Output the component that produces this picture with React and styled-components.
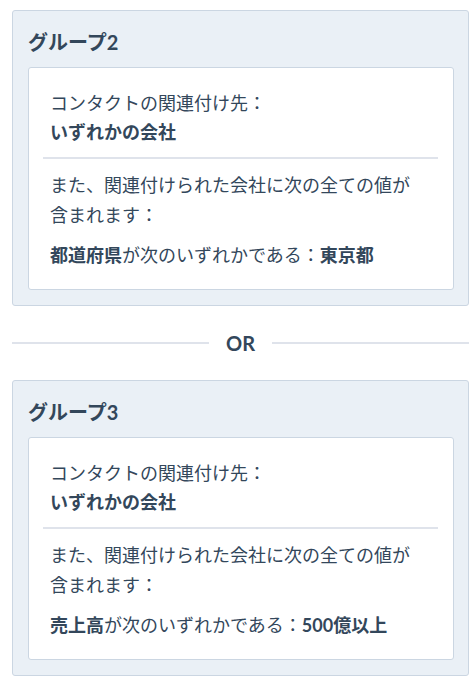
import styled, { createGlobalStyle } from 'styled-components'

const GlobalStyle = createGlobalStyle`
body {
  margin: 0;
  background: #ffffff;
  font-family: Lato, "Noto Sans CJK JP", sans-serif;
  color: #33475b;
}
`;

const Page = styled.div`
padding: 10px 7px 0 12px;
display: flex;
flex-direction: column;
`;

const Group = styled.section`
background-color: #eaf0f6;
border: 1px solid #cbd6e2;
border-radius: 3px;
padding: 19px 14px 15px 15px;
`;

const GroupTitle = styled.h2`
margin: 0 0 13px;
font-size: 20px;
line-height: 24px;
font-weight: 700;
`;

const Card = styled.div`
background: #ffffff;
border: 1px solid #cbd6e2;
border-radius: 3px;
padding: 21px 15px 19px 14px;
`;

const Block = styled.div`
padding: 0 12px 0 7px;
font-size: 18px;
line-height: ${p => p.$lh || 29}px;
`;

const Divider = styled.hr`
border: none;
border-top: 2px solid #dfe3eb;
margin: 10px 0 11px;
`;

const Rule = styled.div`
margin-top: ${p => p.$gap || 0}px;
`;

const Strong = styled.strong`
font-weight: 700;
`;

const OrRow = styled.div`
display: flex;
align-items: center;
gap: 17px;
margin: 25px 0 25px;
font-size: 20px;
font-weight: 700;
line-height: 24px;
&::before, &::after {
  content: '';
  flex: 1;
  height: 2px;
  background: #dfe3eb;
}
`;

const groups = [
  { name: 'グループ2', field: '都道府県', value: '東京都' },
  { name: 'グループ3', field: '売上高', value: '500億以上' },
];

const GroupCard = ({ name, field, value }) => (
  <Group>
    <GroupTitle>{name}</GroupTitle>
    <Card>
      <Block>
        コンタクトの関連付け先：
        <br />
        <Strong>いずれかの会社</Strong>
      </Block>
      <Divider />
      <Block $lh={30}>
        また、関連付けられた会社に次の全ての値が含まれます：
        <Rule $gap={10}>
          <Strong>{field}</Strong>が次のいずれかである：<Strong>{value}</Strong>
        </Rule>
      </Block>
    </Card>
  </Group>
);

const App = () => {
  return (
    <>
      <GlobalStyle />
      <Page>
        <GroupCard {...groups[0]} />
        <OrRow>OR</OrRow>
        <GroupCard {...groups[1]} />
      </Page>
    </>
  )
}

export default App
